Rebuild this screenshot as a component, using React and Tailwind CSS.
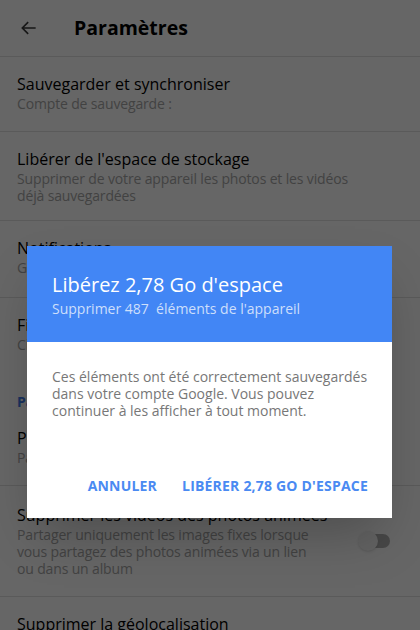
import React from 'react'

const ROWS = [
  { title: 'Sauvegarder et synchroniser', sub: ['Compte de sauvegarde :'], h: 'h-[75px]' },
  { title: "Libérer de l'espace de stockage", sub: ['Supprimer de votre appareil les photos et les vidéos', 'déjà sauvegardées'], h: 'h-[89px]' },
  { title: 'Notifications', sub: ['Gérer les notifications'], h: 'h-[77px]' },
  { title: 'Filtre de partage de lieux', sub: ['Choisir les lieux partagés'], h: 'h-[78px]', noLine: true },
]

const Row = ({ title, sub, h, pt = 'pt-[16px]', noLine, toggle }) => (
  <div className={`${h} ${pt} flex items-start px-[17px] ${noLine ? '' : 'border-b border-[#e2e2e2]'}`}>
    <div className="flex-1">
      <div className="text-[16px] leading-[22px] text-black">{title}</div>
      {sub.map(s => (
        <div key={s} className="text-[14px] leading-[17px] text-[#a6a6a6] tracking-[-0.15px]">{s}</div>
      ))}
    </div>
    {toggle && (
      <div className="relative mt-[30px] mr-[13px] w-[30px] h-[14px] rounded-full bg-[#b2b2b2]">
        <div className="absolute -left-[2px] -top-[3px] w-[20px] h-[20px] rounded-full bg-[#f4f4f4] shadow" />
      </div>
    )}
  </div>
)

export default function App() {
  return (
    <div className="relative w-[420px] h-[630px] overflow-hidden bg-white" style={{ fontFamily: '"Open Sans", sans-serif' }}>
      {/* page under the dialog */}
      <div className="h-[57px] flex items-center border-b border-[#e2e2e2]">
        <svg className="ml-[19px]" width="20" height="20" viewBox="0 0 24 24" fill="none" stroke="#3a3a3a" strokeWidth="2">
          <path d="M20 12H4M11 5l-7 7 7 7" />
        </svg>
        <div className="ml-[35px] text-[19.5px] font-bold text-black">Paramètres</div>
      </div>
      {ROWS.map(r => <Row key={r.title} {...r} />)}
      <div className="h-[45px] px-[17px] pt-[16px] text-[14px] leading-[20px] font-bold text-[#3f7be8]">Partage</div>
      <Row title="Partenaires" sub={['Partager automatiquement']} h="h-[65px]" pt="pt-[6px]" />
      <Row title="Supprimer les vidéos des photos animées"
        sub={['Partager uniquement les images fixes lorsque', 'vous partagez des photos animées via un lien', 'ou dans un album']}
        h="h-[111px]" pt="pt-[18px]" toggle />
      <Row title="Supprimer la géolocalisation" sub={[]} h="h-[60px]" noLine />

      {/* scrim */}
      <div className="absolute inset-0 bg-black/60" />

      {/* dialog */}
      <div className="absolute left-[27px] top-[246px] w-[365px] h-[272px] bg-white shadow-2xl flex flex-col">
        <div className="h-[96px] bg-[#4286f5] px-[25px] pt-[26px]">
          <div className="text-[20px] leading-[26px] text-white">Libérez 2,78 Go d'espace</div>
          <div className="text-[14px] leading-[22px] text-[#cddffb]">Supprimer 487&nbsp; éléments de l'appareil</div>
        </div>
        <div className="pl-[25px] pr-[10px] pt-[26px] text-[14px] leading-[17px] text-[#777] whitespace-nowrap">
          Ces éléments ont été correctement sauvegardés<br />
          dans votre compte Google. Vous pouvez<br />
          continuer à les afficher à tout moment.
        </div>
        <div className="mt-auto mb-[22px] flex justify-end gap-[25px] pr-[24px] text-[14px] font-bold text-[#4a8af2] tracking-[0.2px]">
          <span>ANNULER</span>
          <span>LIBÉRER 2,78 GO D'ESPACE</span>
        </div>
      </div>
    </div>
  )
}
